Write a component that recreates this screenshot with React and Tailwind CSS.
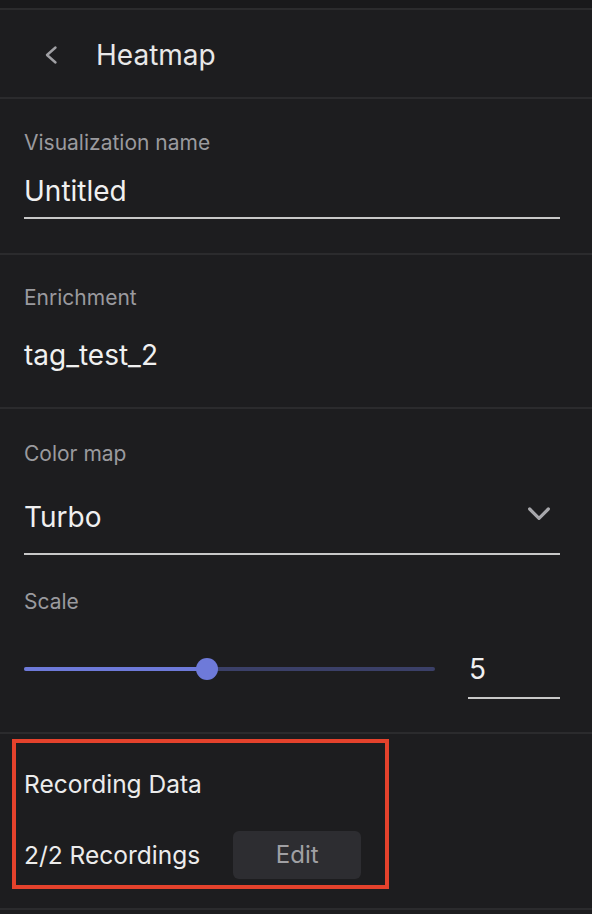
import { useState } from "react";

function Chevron({ dir = "left", className = "" }) {
  const d = dir === "left" ? "M15.5 4.5L7 12l8.5 7.5" : "M5 9l7 7 7-7";
  return (
    <svg className={className} viewBox="0 0 24 24" fill="none" stroke="currentColor" strokeWidth="2.4" strokeLinecap="round" strokeLinejoin="round">
      <path d={d} />
    </svg>
  );
}

export default function App() {
  const [scale] = useState(5);
  const pct = 44.5;

  return (
    <div className="w-[592px] h-[914px] bg-[#1d1d1f] text-[#ececec] overflow-hidden" style={{ fontFamily: "Inter, 'Noto Sans', sans-serif" }}>
      <div className="h-2 bg-[#19191b]" />
      <div className="h-[2px] bg-[#2b2b2d]" />

      {/* header */}
      <div className="h-[89px] pt-[2px] flex items-center border-b-2 border-[#2b2b2d]">
        <Chevron className="w-6 h-6 ml-[40px] text-[#a0a0a4]" />
        <h1 className="ml-[32px] text-[28px] text-[#e8e8e8]">Heatmap</h1>
      </div>

      {/* name */}
      <div className="h-[156px] pl-6 pr-8 pt-8 border-b-2 border-[#2b2b2d]">
        <div className="text-[21px] leading-6 text-[#9a9a9e]">Visualization name</div>
        <div className="mt-[19px] h-[45px] border-b-2 border-[#c8c8c8] text-[28px] leading-[34px] text-[#f0f0f0]">Untitled</div>
      </div>

      {/* enrichment */}
      <div className="h-[154px] pl-6 pr-8 pt-[31px] border-b-2 border-[#2b2b2d]">
        <div className="text-[21px] leading-6 text-[#9a9a9e]">Enrichment</div>
        <div className="mt-[28px] text-[28px] leading-[34px] text-[#f0f0f0]">tag_test_2</div>
      </div>

      {/* color map + scale */}
      <div className="h-[325px] pl-6 pr-8 pt-[33px] border-b-2 border-[#2b2b2d]">
        <div className="text-[21px] leading-6 text-[#9a9a9e]">Color map</div>
        <div className="mt-[34px] h-[55px] flex items-start justify-between border-b-2 border-[#c8c8c8]">
          <span className="text-[28px] leading-[34px] text-[#f0f0f0]">Turbo</span>
          <Chevron dir="down" className="w-8 h-8 -mt-[3px] mr-[5px] text-[#a8a8ac]" />
        </div>
        <div className="mt-[35px] text-[21px] leading-6 text-[#9a9a9e]">Scale</div>
        <div className="mt-[44px] flex items-start">
          <div className="relative w-[411px] h-[22px] flex items-center">
            <div className="h-1 w-full rounded-full bg-[#3b4068]" />
            <div className="absolute left-0 h-1 rounded-full bg-[#6e7ad9]" style={{ width: `${pct}%` }} />
            <div className="absolute w-[22px] h-[22px] -ml-[11px] rounded-full bg-[#6e7ad9]" style={{ left: `${pct}%` }} />
          </div>
          <div className="ml-[33px] w-[92px] h-[47px] border-b-2 border-[#c8c8c8] text-[28px] leading-[34px] text-[#f0f0f0] pl-[1px] -mt-[6px]">
            {scale}
          </div>
        </div>
      </div>

      {/* recording data */}
      <div className="h-[176px] pt-[5px] pl-3 border-b-2 border-[#2b2b2d]">
        <div className="w-[377px] h-[150px] border-4 border-[#e4422c] pl-2 pt-[27px]">
          <div className="text-[24.5px] leading-7 text-[#ececec]">Recording Data</div>
          <div className="mt-[33px] flex items-center">
            <span className="text-[24.5px] leading-7 text-[#ececec]">2/2 Recordings</span>
            <button className="ml-[33px] w-[128px] h-[48px] rounded-md bg-[#2d2d31] text-[24px] text-[#a0a0a4]">Edit</button>
          </div>
        </div>
      </div>
    </div>
  );
}
